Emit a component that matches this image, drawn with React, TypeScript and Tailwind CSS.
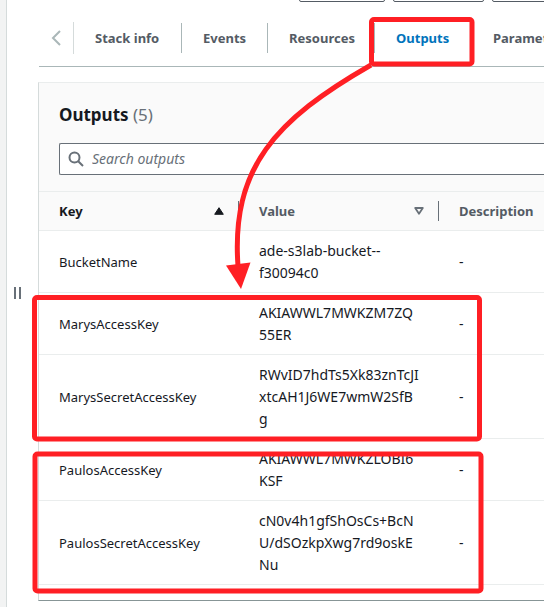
import React from "react";

const tabs = [
  { label: "Stack info", width: "w-[108px]" },
  { label: "Events", width: "w-[86px]" },
  { label: "Resources", width: "w-[107px]" },
  { label: "Outputs", width: "w-[97px]" },
  { label: "Parameters", width: "w-[118px]" },
];

const rows = [
  { key: "BucketName", value: ["ade-s3lab-bucket--", "f30094c0"] },
  { key: "MarysAccessKey", value: ["AKIAWWL7MWKZM7ZQ", "55ER"] },
  { key: "MarysSecretAccessKey", value: ["RWvID7hdTs5Xk83znTcJI", "xtcAH1J6WE7wmW2SfB", "g"] },
  { key: "PaulosAccessKey", value: ["AKIAWWL7MWKZLOBI6", "KSF"] },
  { key: "PaulosSecretAccessKey", value: ["cN0v4h1gfShOsCs+BcN", "U/dSOzkpXwg7rd9oskE", "Nu"] },
];

function StackActions() {
  const button = "h-8 shrink-0 rounded-[2px] border border-[#545b64] bg-white";
  return (
    <div className="flex h-[2px] items-end gap-2 overflow-hidden pl-[260px]">
      <button type="button" aria-label="Delete" className={`${button} w-[86px]`} />
      <button type="button" aria-label="Update" className={`${button} w-[91px]`} />
      <button type="button" aria-label="Stack actions" className={`${button} w-[120px]`} />
    </div>
  );
}

function Tabs() {
  return (
    <nav className="mt-5 flex h-[45px] items-start overflow-hidden border-b border-[#aab7b8]">
      <button type="button" aria-label="Scroll left" className="flex h-8 w-[35px] shrink-0 items-center justify-center border-r border-[#d5dbdb]">
        <svg width="10" height="16" viewBox="0 0 10 16" fill="none" stroke="#aab7b8" strokeWidth="2">
          <path d="M9 1 2 8l7 7" />
        </svg>
      </button>
      {tabs.map((tab) => {
        const active = tab.label === "Outputs";
        return (
          <button
            key={tab.label}
            type="button"
            aria-current={active ? "page" : undefined}
            className={`mt-px h-[30px] shrink-0 border-r border-[#aab7b8] pt-px pl-[21px] text-left text-[13px] font-bold whitespace-nowrap ${tab.width} ${active ? "text-[#0073bb]" : "text-[#545b64]"}`}
          >
            {tab.label}
          </button>
        );
      })}
    </nav>
  );
}

function OutputsTable() {
  const head = "h-[39px] border-b border-[#eaeded] pl-5 text-left text-[13px] leading-5 font-bold";
  const label = "flex h-5 items-center justify-between border-r border-[#687078] pr-[14px]";
  return (
    <table className="w-full table-fixed border-separate border-spacing-0">
      <colgroup>
        <col className="w-[200px]" />
        <col className="w-[200px]" />
        <col />
      </colgroup>
      <thead className="bg-[#fafafa]">
        <tr>
          <th scope="col" className={`${head} text-[#16191f]`}>
            <div className={label}>
              Key
              <svg width="10" height="8" viewBox="0 0 10 8" fill="#16191f" stroke="#16191f" strokeLinejoin="round">
                <path d="M5 .7.7 7.3h8.6Z" />
              </svg>
            </div>
          </th>
          <th scope="col" className={`${head} text-[#545b64]`}>
            <div className={label}>
              Value
              <svg width="10" height="8" viewBox="0 0 10 8" fill="none" stroke="#687078" strokeWidth="1.8" strokeLinejoin="round">
                <path d="M1.2 1h7.6L5 6.8Z" />
              </svg>
            </div>
          </th>
          <th scope="col" className={`${head} text-[#545b64]`}>Description</th>
        </tr>
      </thead>
      <tbody className="text-sm leading-[22px] text-[#16191f]">
        {rows.map((row) => (
          <tr key={row.key}>
            <td className="border-b border-[#eaeded] pl-5 text-[13px]">{row.key}</td>
            <td className="border-b border-[#eaeded] pt-[9px] pb-2 pl-5 whitespace-nowrap">
              {row.value.map((line) => (
                <span key={line} className="block">{line}</span>
              ))}
            </td>
            <td className="border-b border-[#eaeded] pl-5">-</td>
          </tr>
        ))}
      </tbody>
    </table>
  );
}

function Annotations() {
  return (
    <svg className="pointer-events-none absolute top-0 left-0" width="544" height="607" viewBox="0 0 544 607" fill="none" stroke="#ff1f24" strokeWidth="5">
      <rect x="371.5" y="19.5" width="100.5" height="44.5" rx="2.5" />
      <rect x="34.5" y="297.5" width="445" height="141.5" rx="2.5" />
      <rect x="35" y="454" width="446" height="137" rx="2.5" />
      <path d="M371 65C275 120 231 168 238 266" />
      <path d="M226 265.5 250.500 262.500 241 289Z" fill="#ff1f24" stroke="none" />
    </svg>
  );
}

export default function App() {
  return (
    <div className="relative flex min-h-screen overflow-hidden bg-white font-['Noto_Sans','Open_Sans',sans-serif]">
      <aside className="w-[7px] shrink-0 border-r border-[#d5dbdb] bg-[#f2f3f3]" />
      <div className="flex w-[31px] shrink-0 items-start pt-[287px] pl-[7px]">
        <button type="button" aria-label="Resize panel" className="h-3 w-[7px] border-x-2 border-[#687078]" />
      </div>
      <main className="min-w-0 flex-1">
        <div className="pl-px">
          <StackActions />
          <Tabs />
        </div>
        <section className="mt-[15px] border-t border-b border-l border-t-[#eaeded] border-b-[#879596] border-l-[#d5dbdb] pb-[15px]">
          <header className="border-b border-[#eaeded] bg-[#fafafa] pt-[18px] pb-4 pl-5">
            <h2 className="text-[17px] leading-7 font-bold text-[#16191f]">
              Outputs <span className="font-normal text-[#687078]">(5)</span>
            </h2>
            <label className="mt-[14px] flex h-8 items-center gap-2 rounded-l-[2px] border border-r-0 border-[#687078] bg-white pl-2">
              <svg width="16" height="16" viewBox="0 0 16 16" fill="none" stroke="#687078" strokeWidth="2">
                <circle cx="6.500" cy="6.500" r="5" />
                <path d="m10.200 10.200 4.800 4.800" />
              </svg>
              <input
                type="text"
                aria-label="Search outputs"
                placeholder="Search outputs"
                className="min-w-0 flex-1 bg-transparent text-sm text-[#16191f] outline-none placeholder:text-[#687078] placeholder:italic"
              />
            </label>
          </header>
          <OutputsTable />
        </section>
      </main>
      <Annotations />
    </div>
  );
}
